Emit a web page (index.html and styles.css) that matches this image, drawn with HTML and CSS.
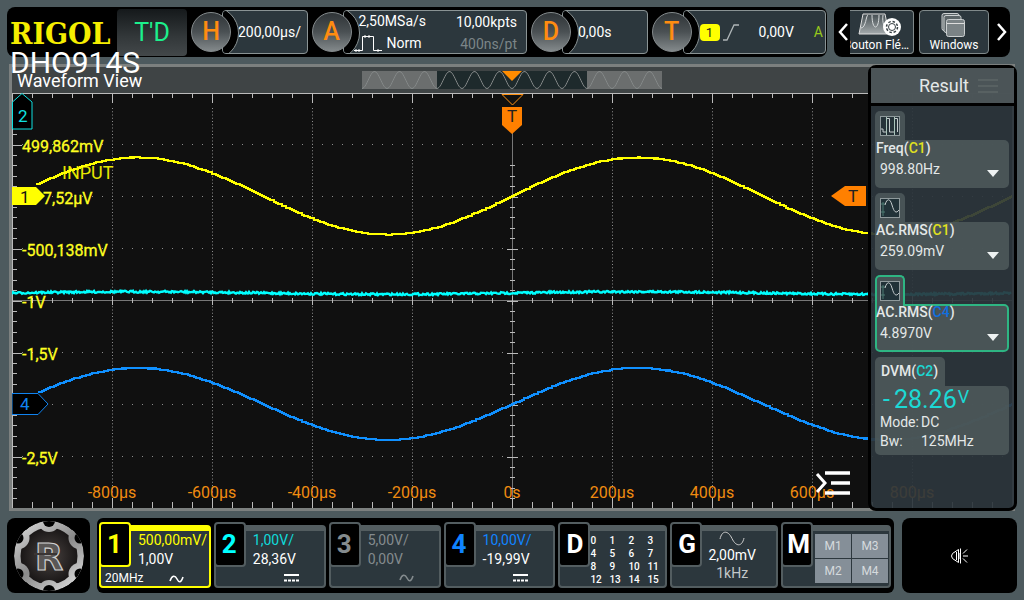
FILE: index.html
```html
<!DOCTYPE html>
<html lang="en">
<head>
<meta charset="utf-8">
<title>DHO914S</title>
<link rel="stylesheet" href="styles.css">
</head>
<body>
<header class="topbar">
  <div class="status">
    <div class="brand">RIGOL<span class="model">DHO914S</span></div>
    <button class="run" type="button">T'D</button>
    <button class="block block-h" type="button"><span class="knob">H</span><span class="pane">200,00µs/</span></button>
    <button class="block block-a" type="button"><span class="knob">A</span>
      <span class="pane acquire">
        <span>2,50MSa/s</span><span class="end">10,00kpts</span>
        <span class="mode"><svg width="28" height="17" viewBox="0 0 28 17"><path d="M0 15.500H8.500V1.500H19.500V15.500H28M2 14v3M5 14v3M11 0v3M15 0v3M24 14v3" fill="none" stroke="#fff"/></svg>Norm</span><span class="end dim">400ns/pt</span>
      </span></button>
    <button class="block block-d" type="button"><span class="knob">D</span><span class="pane">0,00s</span></button>
    <button class="block block-t" type="button"><span class="knob">T</span>
      <span class="pane trigger"><span class="src">1</span>
        <svg width="16" height="17" viewBox="0 0 16 17"><path d="M0 16H4L11 1H16" fill="none" stroke="#aeb5b7" stroke-width="1.300"/></svg>
        <span class="level">0,00V</span><span class="sweep">A</span></span></button>
  </div>
  <nav class="tools">
    <button class="arrow" type="button" aria-label="Previous"><svg width="11" height="20" viewBox="0 0 11 20"><path d="M9 2L2 10L9 18" fill="none" stroke="#fff" stroke-width="2.500"/></svg></button>
    <button class="tool tool-cut" type="button">
      <svg width="44" height="24" viewBox="0 0 44 24"><defs><linearGradient id="g1" x2="0" y2="1"><stop stop-color="#444d51"/><stop offset="1" stop-color="#a5abad"/></linearGradient></defs>
        <path d="M5 1H27L31 21H1Z" fill="url(#g1)" stroke="#ddd"/><path d="M3 15C8 15 8 2 10 2M14 2C14 18 21 18 21 2M25 2C24 10 26 14 29 15" fill="none" stroke="#d8dcdd"/>
        <circle cx="34" cy="14" r="9" fill="#fff"/><circle cx="34" cy="14" r="5.500" fill="none" stroke="#374044" stroke-width="1.500" stroke-dasharray="2.500 1.800"/><circle cx="34" cy="14" r="3.500" fill="none" stroke="#374044"/></svg>
      <span>Bouton Flé…</span></button>
    <button class="tool" type="button">
      <svg width="26" height="24" viewBox="0 0 26 24"><g fill="#5b6467" stroke="#ccd0d1"><rect x="1" y=".5" width="17" height="17" rx="2"/><rect x="3" y="2.500" width="17" height="17" rx="2"/><rect x="5.500" y="6.500" width="18" height="17" rx="2" fill="#7b8386"/></g><path d="M6 10.500H23" stroke="#ddd"/></svg>
      <span>Windows</span></button>
    <button class="arrow" type="button" aria-label="Next"><svg width="11" height="20" viewBox="0 0 11 20"><path d="M2 2L9 10L2 18" fill="none" stroke="#fff" stroke-width="2.500"/></svg></button>
  </nav>
</header>

<main class="view">
  <div class="titlebar">
    <h1>Waveform View</h1>
    <svg class="memory" viewBox="0 0 300 18" aria-hidden="true">
      <rect width="300" height="18" fill="#6b6e6e"/><rect x="75" width="150" height="18" fill="#1e2a2c"/>
      <path id="memwave" fill="none" stroke="#858989"/><path d="M140 0H160L150 10Z" fill="#ff8c00"/>
    </svg>
  </div>
  <svg class="plot" viewBox="0 0 1000 415">
    <rect width="1000" height="415" fill="#101010"/>
    <path id="dots" fill="none" stroke="#8c8c8c"/>
    <path id="rows" fill="none" stroke="#8c8c8c"/>
    <path d="M0 .500H1000M.500 0V415" stroke="#bbb" fill="none"/>
    <path d="M0 207.500H1000M500.500 40V415" stroke="#777" fill="none"/>
    <path id="ticks" fill="none" stroke="#bbb"/>
    <g class="volts">
      <text x="10" y="59">499,862mV</text><text x="31" y="111">7,52µV</text><text x="10" y="163">-500,138mV</text>
      <text x="10" y="215">-1V</text><text x="10" y="267">-1,5V</text><text x="10" y="371">-2,5V</text>
    </g>
    <text class="name" x="50" y="86">INPUT</text>
    <g class="times" id="times"></g>
    <path id="wave1" fill="none" stroke="#ffff00" stroke-width="2"/>
    <path id="wave2" fill="none" stroke="#00ffff" stroke-width="2.400"/>
    <path id="wave4" fill="none" stroke="#1090ff" stroke-width="2"/>
    <path d="M0 94H24L33 103L24 112H0Z" fill="#ffff00"/><text class="flag" x="8" y="110" fill="#111">1</text>
    <path d="M.500 9L10 .500L20 9V36H.500Z" fill="#000" stroke="#10e0e0"/><text class="flag" x="6" y="29" fill="#10e0e0">2</text>
    <path d="M0 300.500H26L36 311L26 321.500H0Z" fill="#000" stroke="#1083f0"/><text class="flag" x="8" y="317" fill="#1083f0">4</text>
    <path d="M490 1.500H511L500.500 12Z" fill="#111" stroke="#ff9010"/>
    <path d="M490 14H510V32L500 41L490 32Z" fill="#ff8000"/><text class="flag" x="495" y="29" fill="#222">T</text>
    <path d="M819 103L833 93H854V113H833Z" fill="#ff8000"/><text class="flag" x="836" y="109" fill="#222">T</text>
  </svg>
  <button class="fold" type="button" aria-label="Hide results"><svg width="36" height="24" viewBox="0 0 36 24"><path d="M2 3L10 12L2 21" fill="none" stroke="#fff" stroke-width="3"/><path d="M10 2H35M16 12H35M10 22H35" stroke="#fff" stroke-width="3.500"/></svg></button>

  <aside class="result">
    <h2>Result<svg width="20" height="14" viewBox="0 0 20 14"><path d="M0 1H20M0 7H20M0 13H20" stroke="#5d6567" stroke-width="1.500"/></svg></h2>
    <div class="list">
      <button class="item" type="button"><span class="tab"><svg width="20" height="20" viewBox="0 0 20 20"><rect x=".5" y=".5" width="19" height="19" fill="#26343a" stroke="#8f9a9c"/><path d="M1 13H3V16H6.500V2.500H9.500V16H14.500V2.500H17.500V16" fill="none" stroke="#c5cccd"/><path d="M6.500 1V19M14.500 1V19" stroke="#a9c4ba"/></svg></span>
        <span class="card"><b>Freq(<i class="c1">C1</i>)</b><span>998.80Hz</span></span></button>
      <button class="item" type="button"><span class="tab"><svg width="20" height="20" viewBox="0 0 20 20"><rect x=".5" y=".5" width="19" height="19" fill="#213238" stroke="#8f9a9c"/><path d="M1 6H5M1 14H5M3 4V18" stroke="#4c7a72"/><path d="M5 7C7 0 10 0 12 7S16 16 19 12" fill="none" stroke="#c5cccd"/></svg></span>
        <span class="card"><b>AC.RMS(<i class="c1">C1</i>)</b><span>259.09mV</span></span></button>
      <button class="item selected" type="button"><span class="tab"><svg width="20" height="20" viewBox="0 0 20 20"><rect x=".5" y=".5" width="19" height="19" fill="#213238" stroke="#8f9a9c"/><path d="M1 6H5M1 14H5M3 4V18" stroke="#4c7a72"/><path d="M5 7C7 0 10 0 12 7S16 16 19 12" fill="none" stroke="#c5cccd"/></svg></span>
        <span class="card"><b>AC.RMS(<i class="c4">C4</i>)</b><span>4.8970V</span></span></button>
      <section class="dvm">
        <h3>DVM(<i class="c2">C2</i>)</h3>
        <div class="card"><p class="lcd"><span>-</span><span>28.26</span><small>V</small></p>
          <dl><dt>Mode:</dt><dd>DC</dd><dt>Bw:</dt><dd>125MHz</dd></dl></div>
      </section>
    </div>
  </aside>
</main>

<footer class="bottom">
  <button class="home" type="button" aria-label="Menu">
    <svg width="72" height="72" viewBox="-36 -36 72 72">
      <defs><linearGradient id="g2" x1="-35" y1="-35" x2="20" y2="35" gradientUnits="userSpaceOnUse"><stop stop-color="#e0e0e0"/><stop offset=".55" stop-color="#8a8a8a"/><stop offset="1" stop-color="#d8d8d8"/></linearGradient>
      <radialGradient id="g3"><stop stop-color="#4a4442"/><stop offset="1" stop-color="#191616"/></radialGradient>
      <clipPath id="disc"><circle r="35"/></clipPath></defs>
      <g clip-path="url(#disc)">
        <circle r="35" fill="url(#g2)"/><circle r="28.500" fill="url(#g3)"/>
        <g fill="url(#g2)"><circle cy="-35" r="11"/><circle cy="35" r="11"/><circle cx="30.500" cy="-18" r="11"/><circle cx="30.500" cy="18" r="11"/><circle cx="-30.500" cy="-18" r="11"/><circle cx="-30.500" cy="18" r="11"/></g>
        <g fill="#000"><circle cy="-35" r="6"/><circle cy="35" r="6"/><circle cx="31" cy="-18" r="5.500"/><circle cx="31" cy="18" r="5.500"/><circle cx="-31" cy="-18" r="5.500"/><circle cx="-31" cy="18" r="5.500"/></g>
      </g>
      <text class="r" text-anchor="middle" y="14">R</text><path d="M-15 -2H8" stroke="#3a3534" stroke-width="2"/>
    </svg></button>
  <div class="channels">
    <button class="ch ch1" type="button"><span class="num">1</span><span class="scale">500,00mV/</span><span class="offset">1,00V</span><span class="foot"><span>20MHz</span><svg width="15" height="8" viewBox="0 0 15 8"><path d="M1 6C3 0 6 0 8 4S12 8 14 2" fill="none" stroke="currentColor" stroke-width="1.600"/></svg></span></button>
    <button class="ch ch2" type="button"><span class="num">2</span><span class="scale">1,00V/</span><span class="offset">28,36V</span><span class="foot"><svg width="15" height="8" viewBox="0 0 15 8"><path d="M0 1H15" stroke="currentColor" stroke-width="2"/><path d="M0 6.500H15" stroke="currentColor" stroke-width="2" stroke-dasharray="3 1"/></svg></span></button>
    <button class="ch ch3" type="button"><span class="num">3</span><span class="scale">5,00V/</span><span class="offset">0,00V</span><span class="foot"><svg width="15" height="8" viewBox="0 0 15 8"><path d="M1 6C3 0 6 0 8 4S12 8 14 2" fill="none" stroke="currentColor" stroke-width="1.600"/></svg></span></button>
    <button class="ch ch4" type="button"><span class="num">4</span><span class="scale">10,00V/</span><span class="offset">-19,99V</span><span class="foot"><svg width="15" height="8" viewBox="0 0 15 8"><path d="M0 1H15" stroke="currentColor" stroke-width="2"/><path d="M0 6.500H15" stroke="currentColor" stroke-width="2" stroke-dasharray="3 1"/></svg></span></button>
    <button class="ch digital" type="button"><span class="num">D</span><span class="bits"><span>0</span><span>1</span><span>2</span><span>3</span><span>4</span><span>5</span><span>6</span><span>7</span><span>8</span><span>9</span><span>10</span><span>11</span><span>12</span><span>13</span><span>14</span><span>15</span></span></button>
    <button class="ch gen" type="button"><span class="num">G</span><svg width="26" height="15" viewBox="0 0 26 15"><path d="M1 8C3 -1 9 -1 13 7.500S23 16 25 7" fill="none" stroke="#ccc"/></svg><span>2,00mV</span><span class="freq">1kHz</span></button>
    <button class="ch math" type="button"><span class="num">M</span><span class="maths"><span>M1</span><span>M3</span><span>M2</span><span>M4</span></span></button>
  </div>
  <button class="sound" type="button" aria-label="Sound"><svg width="17" height="16" viewBox="0 0 17 16"><path d="M1.500 5.500L7.500 1.500V14.500L1.500 10.500L.5 8ZM5.500 4V12M9.500 .500V15.500M8 5V11M12 5.500L16 1.500M12 8H17M12 10.500L16 14.500" fill="none" stroke="#fff"/></svg></button>
</footer>
<script src="scope.js"></script>
</body>
</html>
```

FILE: styles.css
```css
* { box-sizing: border-box; }
body { margin: 0; padding: 7px; min-height: 100vh; display: flex; flex-direction: column; gap: 7px; background: #4d5a5e; color: #fff; font: 14px/18px Roboto, sans-serif; }
button { margin: 0; padding: 0; border: 0; background: none; color: inherit; font: inherit; text-align: left; cursor: pointer; }
h1, h2, h3, p, dl, dd { margin: 0; font-weight: 400; }
i { font-style: normal; }
svg { display: block; flex: none; }

.topbar { display: flex; gap: 7px; height: 50px; padding-right: 7px; }
.status { flex: 1; display: flex; gap: 4px; padding: 3px 1px 3px 3px; background: #000; border-radius: 8px; }
.brand { position: relative; width: 103px; color: #f5ee00; font: bold 30px/48px "DejaVu Serif Condensed", "DejaVu Serif", serif; white-space: nowrap; }
.model { position: absolute; z-index: 3; left: 0; top: 37px; color: #fff; font: 30px/32px Roboto, sans-serif; }
.run { width: 70px; margin-top: -1px; margin-bottom: -2px; border-radius: 4px; background: linear-gradient(#15191b, #33383a 60%, #43484a); color: #1cf08c; font-size: 25px; text-align: center; }
.block { display: flex; align-items: center; color: #fff; white-space: nowrap; }
.block-h, .block-d { flex: 1 1 116px; }
.block-a { flex: 1 1 215px; }
.block-t { flex: 1 1 174px; }
.knob { position: relative; z-index: 1; flex: none; width: 40px; height: 40px; border-radius: 50%; border: 1px solid #858b8d; background: linear-gradient(#2f3437, #4b5154 50%, #83898b); color: #ff8c10; font-weight: 500; font-size: 25px; line-height: 38px; text-align: center; }
.pane { position: relative; flex: 1; align-self: stretch; display: flex; align-items: center; margin-left: -9px; padding-left: 15px; overflow: hidden; border: 1px solid #8a9394; border-radius: 4px; background: #2c373d; }
.pane::before { content: ""; position: absolute; left: -38px; top: -5px; width: 52px; height: 52px; border: 1px solid #8a9394; border-radius: 50%; background: #000; }
.acquire { display: grid; grid-template-columns: 1fr auto; align-content: center; row-gap: 2px; padding-right: 9px; }
.acquire .end { padding-top: 2px; text-align: right; }
.acquire .mode { position: relative; display: flex; align-items: center; gap: 5px; margin-left: -5px; }
.dim { color: #7b8588; }
.trigger { gap: 3px; padding-right: 2px; }
.src { position: relative; width: 20px; margin-left: 1px; border-radius: 4px; background: #ff0; color: #222; line-height: 17px; font-size: 13px; text-align: center; }
.level { flex: 1; text-align: center; }
.sweep { color: #98c81c; }
.tools { display: flex; align-items: stretch; gap: 5px; width: 176px; padding: 3px 2px; border-radius: 8px; background: #000; }
.arrow { flex: none; display: flex; align-items: center; width: 14px; justify-content: center; }
.tool { flex: 1 1 70px; min-width: 0; display: flex; flex-direction: column; align-items: center; justify-content: space-between; padding: 2px 0 0; overflow: hidden; border: 1px solid #80898a; border-radius: 4px; background: #2c373d; font-size: 12px; line-height: 16px; white-space: nowrap; }
.tool-cut { flex: 1 1 64px; margin-left: -5px; border-left: 0; border-radius: 0 4px 4px 0; align-items: flex-end; padding-right: 4px; }
.tool-cut svg { align-self: center; }

.view { position: relative; margin: 0 2px; border: 3px solid #7c807f; }
.titlebar { display: grid; grid-template-columns: 1fr 30% 1fr; align-items: center; height: 26px; background: #3f4445; }
.titlebar h1 { padding: 2px 0 0 5px; font-size: 18px; }
.memory { width: 100%; }
.plot { width: 100%; height: auto; font-family: Roboto, sans-serif; font-size: 16px; }
.volts { fill: #ffff20; stroke: #ffff20; stroke-width: .3px; }
.name { fill: #e8e800; font-size: 18px; }
.times { fill: #f08c10; text-anchor: middle; }
.flag { font-size: 17px; }
.fold { position: absolute; right: 161px; bottom: 13px; }

.result { position: absolute; right: -5px; top: -2px; bottom: -3px; width: 149px; border: 3px solid #000; border-radius: 8px; background: rgba(44, 54, 61, .92); color: #e4e8e8; }
.result h2 { display: flex; align-items: center; justify-content: flex-end; gap: 9px; height: 38px; padding-right: 16px; border-bottom: 3px solid #000; background: rgba(78, 86, 89, .94); font-size: 18px; }
.list { display: flex; flex-direction: column; gap: 5px; padding: 5px 5px 0 4px; }
.item { display: block; width: 100%; }
.tab { display: flex; align-items: center; justify-content: center; width: 30px; height: 29px; border-radius: 5px 5px 0 0; background: #485356; }
.card { display: block; border-radius: 0 5px 5px 5px; background: rgba(79, 90, 92, .85); }
.item .card { position: relative; height: 48px; padding: 0 5px; }
.item .card::after { content: ""; position: absolute; right: 10px; bottom: 11px; border: 6px solid transparent; border-top: 7px solid #eef2f2; border-bottom: 0; }
.item b { display: block; margin: 0 -4px; font-weight: 500; line-height: 17px; }
.item .card span { display: block; line-height: 24px; }
.selected .tab { position: relative; z-index: 1; height: 31px; margin-bottom: -2px; padding-bottom: 2px; border: 2px solid #2eb583; border-bottom: 0; }
.selected .card { padding: 0 3px; border: 2px solid #2eb583; }
.selected b { position: relative; z-index: 2; margin-top: -2px; }
.selected .card::after { right: 8px; bottom: 9px; }
.c1 { color: #e0e020; }
.c2 { color: #1cd8d4; }
.c4 { color: #1070e0; }
.dvm h3 { width: 70px; padding-left: 6px; border-radius: 5px 5px 0 0; background: rgba(79, 90, 92, .85); font-size: 14px; font-weight: 500; line-height: 29px; }
.dvm .card { padding: 0 5px 4px; }
.lcd { display: flex; gap: 4px; padding-left: 3px; color: #1cd8d4; font-size: 25px; line-height: 27px; }
.lcd small { margin-left: -3px; font-size: 18px; line-height: 22px; }
.dvm dl { display: grid; grid-template-columns: 41px 1fr; line-height: 19px; }

.bottom { display: flex; align-items: stretch; height: 75px; }
.home { width: 83px; margin-right: 7px; display: flex; align-items: center; justify-content: center; border-radius: 8px; background: #000; }
.r { font: bold 37px "DejaVu Sans", sans-serif; fill: #5a5756; stroke: #cfcfcf; stroke-width: 1.2px; }
.channels { flex: 1; display: flex; gap: 3px; padding: 7px 3px 5px 2px; border-radius: 6px; background: #000; white-space: nowrap; }
.ch { position: relative; flex: 1 1 112px; min-width: 0; display: flex; flex-direction: column; padding-left: 37px; border: 2px solid #535d60; border-top-width: 6px; border-radius: 4px; background: #2c373d; line-height: 19px; }
.num { position: absolute; left: -2px; top: -9px; width: 32px; height: 45px; border: 2px solid #535d60; border-radius: 4px; background: #000; font-size: 26px; font-weight: 700; line-height: 41px; padding-left: 6px; }
.foot { display: flex; align-items: center; justify-content: flex-end; flex: 1; padding-right: 25px; }
.foot span { flex: 1; margin-left: -33px; font-size: 12px; }
.ch1, .ch1 .num { border-color: #ff0; }
.ch1 .num, .ch1 .scale { color: #ff0; }
.ch2 .num { color: #00ffff; }
.ch2 .scale { color: #10dada; }
.ch3 { color: #848b8e; }
.ch4 .num, .ch4 .scale { color: #1083ff; }
.digital { flex-basis: 109px; padding: 3px 0 0 30px; }
.bits { display: grid; grid-template-columns: repeat(4, 19px); font-size: 10px; font-weight: 500; line-height: 13px; }
.gen { flex-basis: 108px; align-items: center; padding-left: 16px; line-height: 18px; }
.freq { color: #c3c8ca; }
.math { flex-basis: 110px; padding: 3px 1px 3px 32px; }
.math .num { padding-left: 4px; }
.maths { flex: 1; display: grid; grid-template-columns: 1fr 1fr; gap: 1px; color: #d5dadd; font-size: 12px; }
.maths span { display: flex; align-items: center; justify-content: center; background: #858f98; }
.sound { width: 115px; margin-left: 8px; display: flex; align-items: center; justify-content: center; border-radius: 8px; background: #000; }
```

FILE: scope.js
```js
const set = (id, d) => document.getElementById(id).setAttribute('d', d);

// Deterministic noise for the traces
let seed = 7;
const rnd = () => (seed = (seed * 16807) % 2147483647) / 2147483647;

// Graticule
let dots = '', rows = '', ticks = '';
for (let i = 1; i < 10; i++) {
  if (i === 5) continue;
  for (let y = 15; y < 400; y += 3.25) dots += `M${i * 100} ${y + 0.5}h1`;
}
for (let j = -3; j < 4; j++) {
  if (j === 0) continue;
  for (let x = 10; x < 1000; x += 10) rows += `M${x} ${207.5 + j * 52}h1`;
}
for (let i = 0; i <= 50; i++) {
  const x = i * 20 + 0.5, big = i % 5 === 0;
  ticks += `M${x} 0v${big ? 10 : 5}M${x} 415v${big ? -10 : -6}M${x} ${big ? 203 : 205}v${big ? 9 : 5}`;
}
for (let j = -20; j <= 20; j++) {
  const y = Math.round(207.5 + j * 10.4) + 0.5, big = j % 5 === 0;
  ticks += `M0 ${y}h${big ? 10 : 5}`;
  if (j > -14) ticks += `M${big ? 495 : 498} ${y}h${big ? 11 : 5}`;
}
set('dots', dots);
set('rows', rows);
set('ticks', ticks);

// Traces
const sine = (mid, amp, from) => {
  let d = '';
  for (let x = from; x <= 1000; x += 2) {
    const y = Math.round(mid - amp * Math.sin((x - 500) * Math.PI / 250) + (rnd() - 0.5) * 0.7);
    d += d ? `V${y}H${x + 2}` : `M${x} ${y}H${x + 2}`;
  }
  return d;
};
set('wave1', sine(103, 38.5, 24));
set('wave4', sine(311, 36, 26));
let d2 = 'M0 200';
for (let x = 0; x < 1000; x++) {
  const y = 200 - 1.3 * Math.sin((x - 500) * Math.PI / 250) + (rnd() - 0.5) * 2;
  d2 += `L${x} ${y.toFixed(1)}`;
}
set('wave2', d2);

let mem = 'M0 18';
for (let x = 0; x <= 300; x++) mem += `L${x} ${(9 + 8.5 * Math.cos((x - 150) * Math.PI * 2 / 25)).toFixed(1)}`;
set('memwave', mem);

// Time labels
const times = document.getElementById('times');
for (let t = -800; t <= 800; t += 200) {
  const el = document.createElementNS('http://www.w3.org/2000/svg', 'text');
  el.setAttribute('x', 500 + t / 2);
  el.setAttribute('y', 405);
  el.textContent = t ? `${t}µs` : '0s';
  times.append(el);
}
```
